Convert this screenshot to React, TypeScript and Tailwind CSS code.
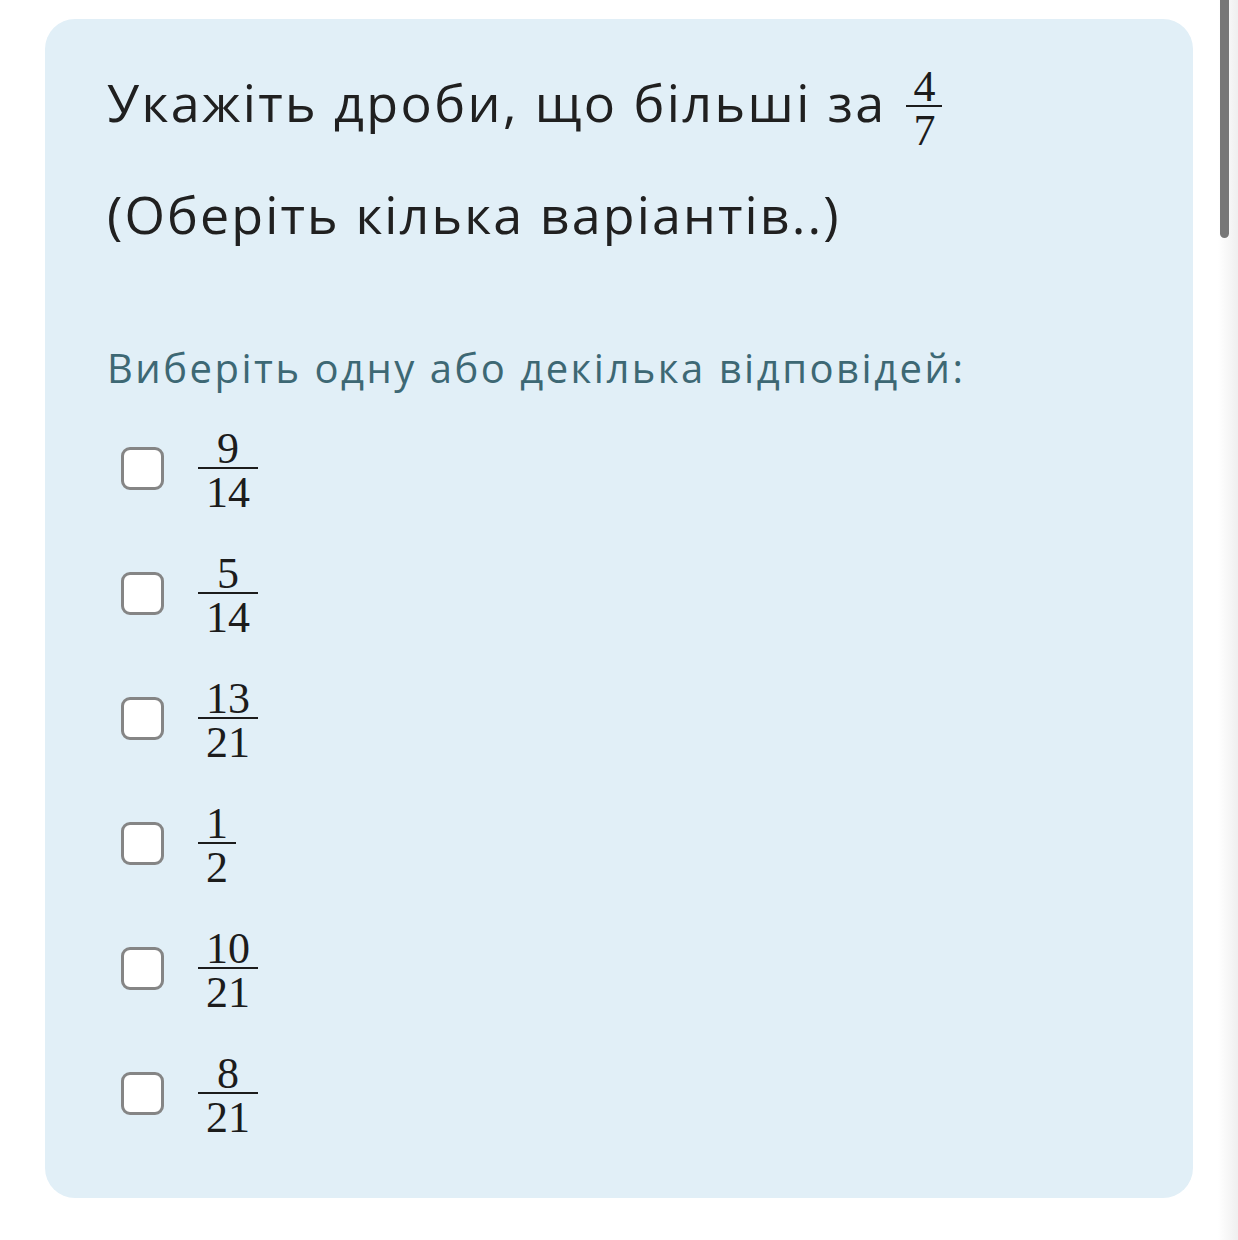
const options = [
	{ num: "9", den: "14" },
	{ num: "5", den: "14" },
	{ num: "13", den: "21" },
	{ num: "1", den: "2" },
	{ num: "10", den: "21" },
	{ num: "8", den: "21" },
];

function Fraction(props: { num: string; den: string; padClassName: string; className?: string }) {
	const { num, den, padClassName, className = "" } = props;

	return (
		<span
			className={`inline-flex shrink-0 flex-col items-center font-['Liberation_Serif',serif] text-[44px]
				tracking-normal text-[#1c1c1c] ${className}`}
		>
			<span className={`leading-none ${padClassName}`}>{num}</span>
			<span className="-mt-[4px] mb-[2px] h-[2px] self-stretch bg-[#1c1c1c]" />
			<span className={`leading-none ${padClassName}`}>{den}</span>
		</span>
	);
}

function Checkbox() {
	return <span className="mb-[6px] size-[43px] shrink-0 rounded-[9px] border-[3px] border-[#858585] bg-white" />;
}

export default function App() {
	return (
		<div className="flex h-[1240px] w-[1238px] bg-white font-['Open_Sans',sans-serif]">
			<div className="flex-1 pt-[19px] pl-[45px]">
				<div className="flex h-[1179px] w-[1148px] flex-col rounded-[30px] bg-[#e1eff7] pt-[45px] pl-[62px]">
					<div className="flex items-start gap-[20px] text-[52px] leading-none tracking-[2.4px] text-[#202020]">
						<p className="mt-[12px]">Укажіть дроби, що більші за</p>
						<Fraction num="4" den="7" padClassName="px-[7px]" className="mt-[1px]" />
					</div>

					<p className="mt-[35px] text-[52px] leading-none tracking-[2.1px] text-[#202020]">
						(Оберіть кілька варіантів..)
					</p>

					<p className="mt-[108px] text-[40px] leading-none tracking-[2.5px] text-[#3d6874]">
						Виберіть одну або декілька відповідей:
					</p>

					<div className="mt-[39px] flex flex-col gap-[37px] pl-[14px]">
						{options.map((option) => (
							<label key={option.num + option.den} className="flex items-center gap-[34px]">
								<Checkbox />
								<Fraction num={option.num} den={option.den} padClassName="px-[8px]" />
							</label>
						))}
					</div>
				</div>
			</div>

			<div className="flex w-[20px] bg-gradient-to-r from-white to-[#efefef] pl-[2px]">
				<div className="h-[238px] w-[9px] rounded-b-full bg-[#777]" />
			</div>
		</div>
	);
}
